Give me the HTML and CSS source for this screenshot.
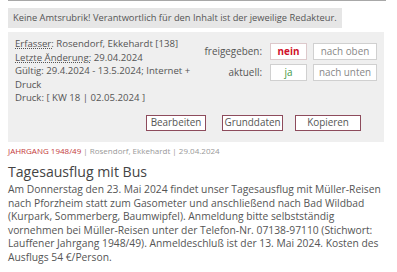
FILE: index.html
```html
<!DOCTYPE html>
<html lang="de">
<head>
<meta charset="utf-8">
<link rel="stylesheet" href="styles.css">
</head>
<body>
<div class="topline"></div>
<div class="notice">Keine Amtsrubrik! Verantwortlich für den Inhalt ist der jeweilige Redakteur.</div>
<div class="admin">
  <div class="admin-top">
    <div class="info">
      <div><abbr class="lbl">Erfasser:</abbr> Rosendorf, Ekkehardt [138]</div>
      <div><abbr class="lbl">Letzte Änderung:</abbr> 29.04.2024</div>
      <div>Gültig: 29.4.2024 - 13.5.2024; Internet + Druck</div>
      <div>Druck: [ KW 18 | 02.05.2024 ]</div>
    </div>
    <div class="status">
      <span class="slabel">freigegeben:</span>
      <span class="sbox no">nein</span>
      <span class="sbox btn">nach oben</span>
      <span class="slabel">aktuell:</span>
      <span class="sbox yes">ja</span>
      <span class="sbox btn">nach unten</span>
    </div>
  </div>
  <div class="actions">
    <span class="abtn b1">Bearbeiten</span>
    <span class="abtn b2">Grunddaten</span>
    <span class="abtn b3">Kopieren</span>
  </div>
</div>
<div class="meta"><span class="cat">JAHRGANG 1948/49</span> | Rosendorf, Ekkehardt | 29.04.2024</div>
<h1 class="title">Tagesausflug mit Bus</h1>
<p class="body">Am Donnerstag den 23. Mai 2024 findet unser Tagesausflug mit Müller-Reisen nach Pforzheim statt zum Gasometer und anschließend nach Bad Wildbad (Kurpark, Sommerberg, Baumwipfel). Anmeldung bitte selbstständig vornehmen bei Müller-Reisen unter der Telefon-Nr. 07138-97110 (Stichwort: Lauffener Jahrgang 1948/49). Anmeldeschluß ist der 13. Mai 2024. Kosten des Ausflugs 54 €/Person.</p>
</body>
</html>
```
FILE: styles.css
```css
html, body { margin: 0; padding: 0; background: #fff; }
body {
  font-family: "Open Sans", "Liberation Sans", sans-serif;
  color: #555;
  padding: 0 8px;
  overflow: hidden;
}
.topline { height: 1px; background: #a8a8a8; margin-right: 3px; }
.notice {
  margin-top: 7px;
  width: 334px;
  box-sizing: border-box;
  background: #e6e6e6;
  font-size: 9.3px;
  line-height: 20px;
  padding: 0 5px;
  color: #555;
  white-space: nowrap;
}
.admin {
  margin-top: 4px;
  width: 376px;
  height: 110px;
  box-sizing: border-box;
  background: #efefef;
  padding: 5px 7px 0 7px;
  font-size: 9.6px;
  line-height: 13.5px;
}
.admin-top { display: flex; justify-content: space-between; height: 78px; }
.info { width: 185px; flex-shrink: 0; }
.lbl { text-decoration: underline dotted; text-underline-offset: 1px; }
.status {
  display: grid;
  grid-template-columns: auto 37px 64px;
  column-gap: 6px;
  row-gap: 4px;
  align-items: center;
  align-content: start;
  padding-top: 6px;
}
.slabel { text-align: right; margin-right: 2px; font-size: 9.9px; }
.sbox {
  display: block;
  height: 17px;
  line-height: 15px;
  box-sizing: border-box;
  border: 1px solid #d0d0d0;
  background: #fff;
  text-align: center;
  font-size: 9.9px;
}
.no { color: #d0112b; font-weight: bold; border-color: #ddc9cc; }
.yes { color: #3f9a3f; }
.btn { color: #888; }
.actions { display: flex; justify-content: flex-end; padding-right: 16px; }
.abtn {
  display: inline-block;
  height: 16px;
  line-height: 13px;
  box-sizing: border-box;
  border: 1.5px solid #8d4b5c;
  background: #fff;
  text-align: center;
  color: #555;
  font-size: 9.9px;
}
.b1 { width: 60px; }
.b2 { width: 61px; margin-left: 16px; }
.b3 { width: 66px; margin-left: 12px; }
.meta { margin-top: 3px; font-size: 8px; color: #999; line-height: 12px; }
.cat { color: #c43a3a; }
.title { margin: 5px 0 0; font-weight: normal; font-size: 14.1px; line-height: 19px; color: #444; }
.body { margin: 2px 0 0; font-size: 10.3px; line-height: 13.5px; color: #555; }
```
